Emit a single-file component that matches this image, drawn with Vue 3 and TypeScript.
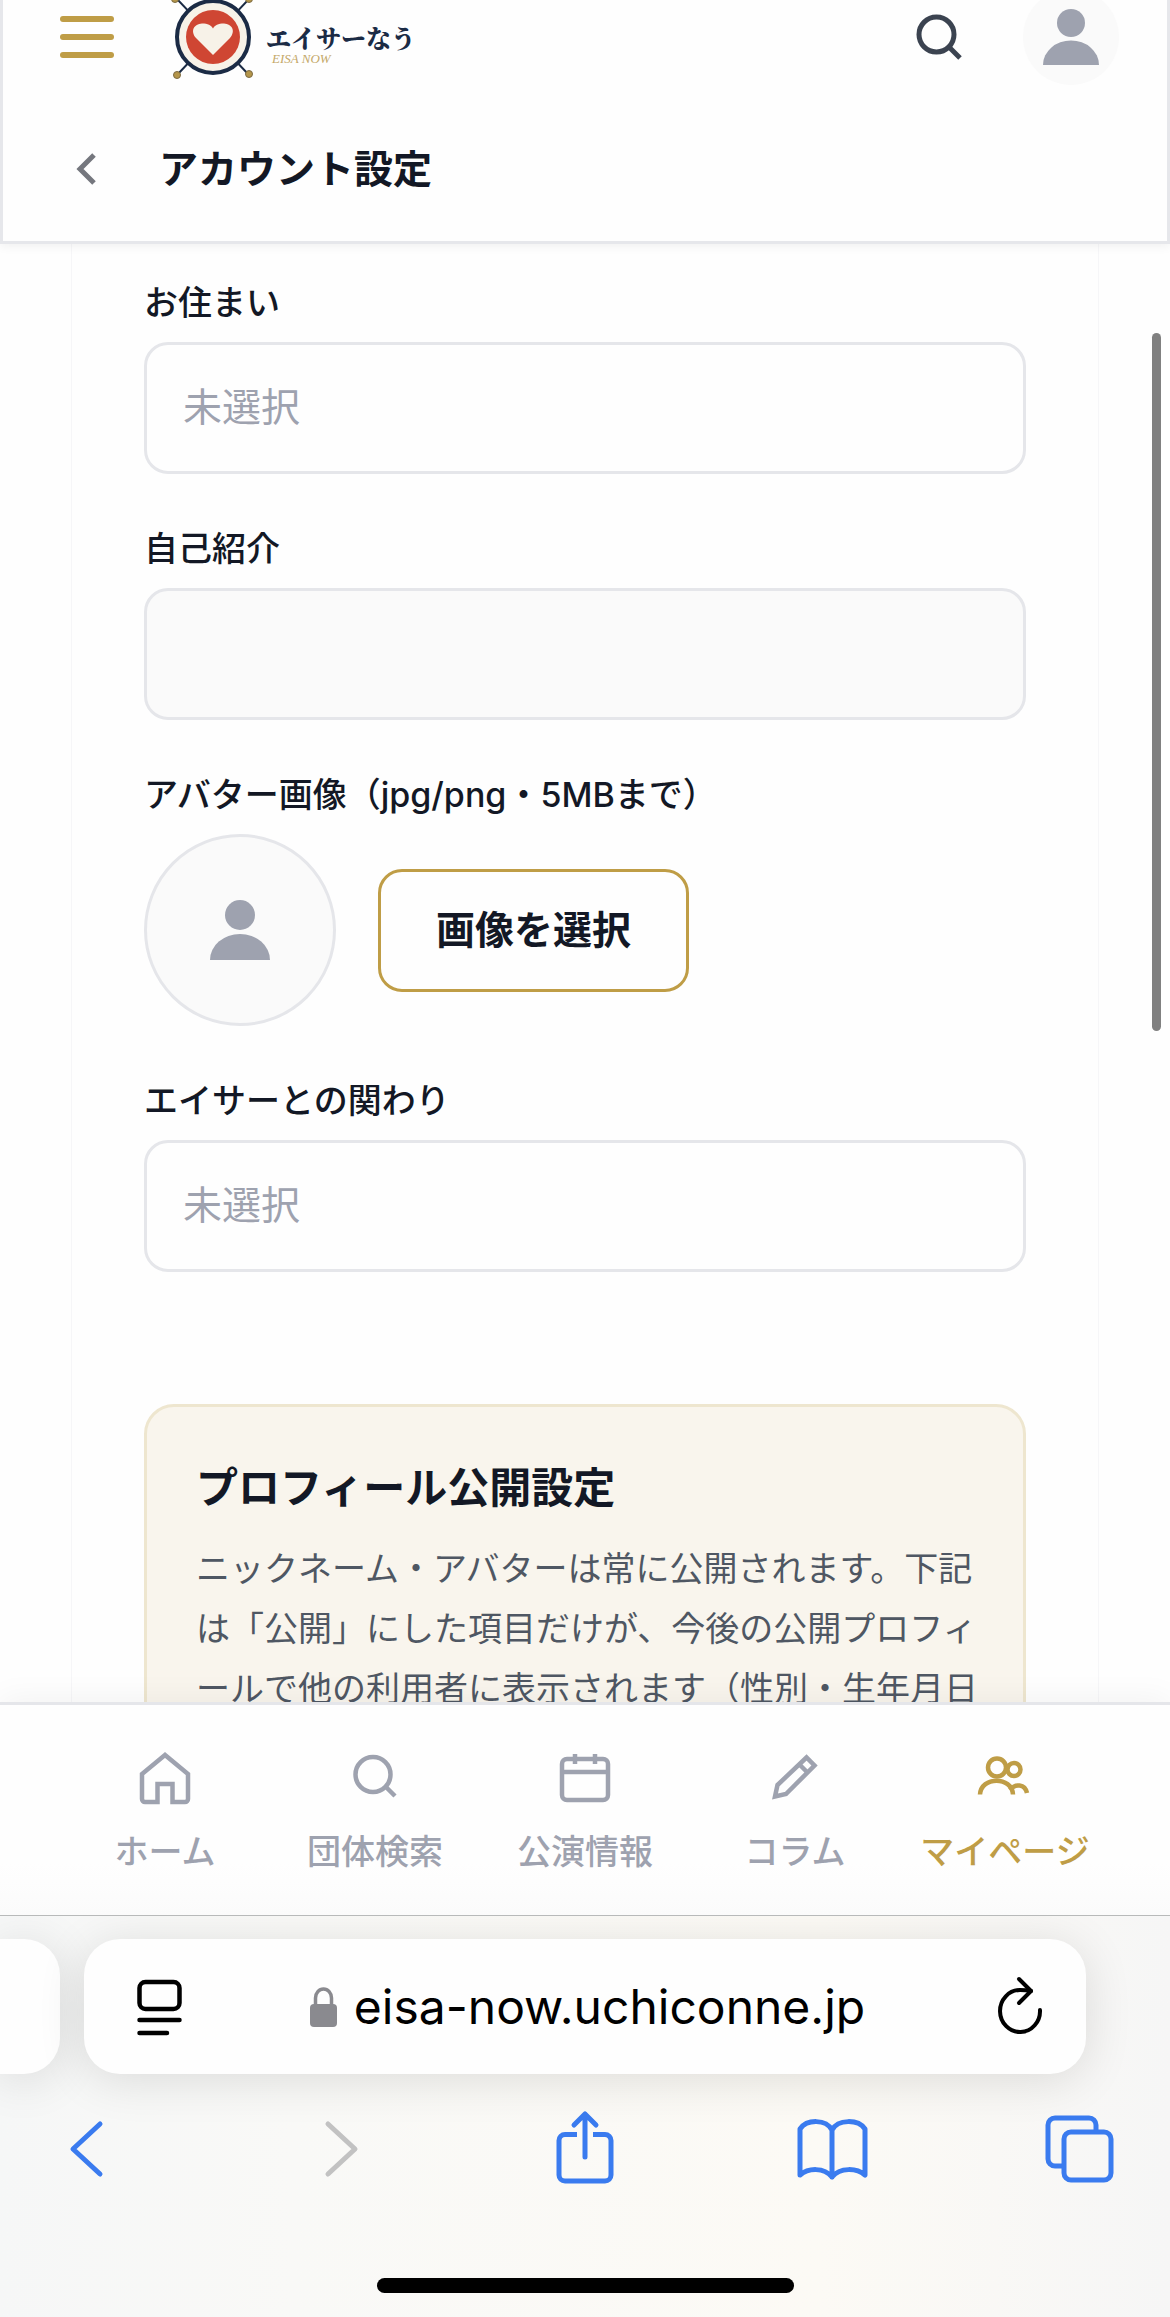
<script setup lang="ts">
import { ref } from 'vue'

interface NavItem {
  id: string
  label: string
  paths: string[]
}

const navItems: NavItem[] = [
  {
    id: 'home',
    label: 'ホーム',
    paths: ['M30 7 7 26V51a3 3 0 0 0 3 3H22.5V36H37.5V54H50a3 3 0 0 0 3-3V26Z'],
  },
  {
    id: 'groups',
    label: '団体検索',
    paths: ['M10.5 26.5a17.5 17.5 0 1 0 35 0a17.5 17.5 0 1 0-35 0', 'M40 38 50 48'],
  },
  {
    id: 'events',
    label: '公演情報',
    paths: [
      'M12 11H48a5 5 0 0 1 5 5V47a5 5 0 0 1-5 5H12a5 5 0 0 1-5-5V16a5 5 0 0 1 5-5Z',
      'M7 24H53',
      'M20 6V16M40 6V16',
    ],
  },
  {
    id: 'column',
    label: 'コラム',
    paths: ['M10 48.5 12.5 37 41.5 9.5 49.5 17.5 21 46Z', 'M34 16 43 25'],
  },
  {
    id: 'mypage',
    label: 'マイページ',
    paths: [
      'M13 19.5a9 9 0 1 0 18 0a9 9 0 1 0-18 0',
      'M32.5 21.5a6.5 6.5 0 1 0 13 0a6.5 6.5 0 1 0-13 0',
      'M5 46.5C6 28 37 28 38 46.5',
      'M35 42C40 35 50 36 52 45',
    ],
  },
]

const activeNav = ref('mypage')
const residence = ref('')
const involvement = ref('')
const introduction = ref('')
</script>

<template>
  <div class="screen">
    <header class="header">
      <div class="brand-row">
        <button class="plain burger" type="button" aria-label="メニュー">
          <span></span><span></span><span></span>
        </button>
        <a class="brand" href="#">
          <svg class="brand-mark" viewBox="0 0 84 84" aria-hidden="true">
            <path d="M6 80 78 4M78 80 6 4" stroke="#1b2b45" stroke-width="2" />
            <circle cx="42" cy="42" r="36" fill="#f7f2e8" stroke="#1b2b45" stroke-width="4" />
            <circle cx="42" cy="42" r="27" fill="#cf4633" />
            <path
              d="M42 60 25 43C19 36 23 29 31 28.5C37 28.5 40 30 42 33.5C44 30 47 28.5 53 28.5C61 29 65 36 59 43Z"
              fill="#f7f2e8"
            />
            <g fill="#b5964a" stroke="#7c6a42" stroke-width="1">
              <circle cx="6" cy="80" r="3.5" />
              <circle cx="78" cy="79" r="3.5" />
              <circle cx="4" cy="4" r="3.5" />
              <circle cx="78" cy="4" r="3.5" />
            </g>
          </svg>
          <span class="brand-text">
            <span class="brand-name">エイサーなう</span>
            <span class="brand-sub">EISA NOW</span>
          </span>
        </a>
        <button class="plain search" type="button" aria-label="検索">
          <svg width="60" height="60" viewBox="0 0 60 60" fill="none" stroke="#3b4350" stroke-width="5">
            <circle cx="30.5" cy="27.5" r="17.5" />
            <path d="M43 40 54 51" />
          </svg>
        </button>
        <button class="plain account" type="button" aria-label="アカウント">
          <svg width="60" height="60" viewBox="0 0 60 60" fill="#9ea2af">
            <circle cx="30" cy="16" r="14" />
            <path d="M2 58a28 24.5 0 0 1 56 0Z" />
          </svg>
        </button>
      </div>
      <div class="title-row">
        <button class="plain" type="button" aria-label="戻る">
          <svg width="36" height="36" viewBox="0 0 36 36" fill="none" stroke="#75777e" stroke-width="5">
            <path d="M25 4 11 18 25 32" />
          </svg>
        </button>
        <h1>アカウント設定</h1>
      </div>
    </header>

    <main class="main">
      <form class="panel" @submit.prevent>
        <div class="field">
          <label for="residence">お住まい</label>
          <select id="residence" v-model="residence" class="control">
            <option value="">未選択</option>
          </select>
        </div>
        <div class="field">
          <label for="introduction">自己紹介</label>
          <input id="introduction" v-model="introduction" class="control filled" type="text" />
        </div>
        <div class="field">
          <label for="avatar">アバター画像（jpg/png・5MBまで）</label>
          <div class="avatar-row">
            <div class="avatar">
              <svg width="60" height="60" viewBox="0 0 60 60" fill="#9ea2af">
                <circle cx="30" cy="15" r="15" />
                <path d="M0 60a30 26 0 0 1 60 0Z" />
              </svg>
            </div>
            <button id="avatar" class="pick" type="button">画像を選択</button>
          </div>
        </div>
        <div class="field">
          <label for="involvement">エイサーとの関わり</label>
          <select id="involvement" v-model="involvement" class="control">
            <option value="">未選択</option>
          </select>
        </div>
        <section class="privacy">
          <h2>プロフィール公開設定</h2>
          <p>
            ニックネーム・アバターは常に公開されます。下記は「公開」にした項目だけが、今後の公開プロフィールで他の利用者に表示されます（性別・生年月日
          </p>
        </section>
      </form>
      <div class="scroll-thumb"></div>
    </main>

    <nav class="tabs">
      <a
        v-for="item in navItems"
        :key="item.id"
        href="#"
        :class="{ active: item.id === activeNav }"
        @click.prevent="activeNav = item.id"
      >
        <svg width="60" height="60" viewBox="0 0 60 60" fill="none" stroke="currentColor" stroke-width="4.5">
          <path v-for="d in item.paths" :key="d" :d="d" />
        </svg>
        <span>{{ item.label }}</span>
      </a>
    </nav>

    <footer class="browser">
      <div class="address-row">
        <div class="pill previous"></div>
        <div class="pill address">
          <button class="plain" type="button" aria-label="ページ設定">
            <svg
              width="45"
              height="56"
              viewBox="0 0 45 56"
              fill="none"
              stroke="#000"
              stroke-width="4.5"
              stroke-linecap="round"
            >
              <rect x="2.5" y="3" width="40" height="27" rx="6" />
              <path d="M2.5 41H42.5M2.5 54H30" />
            </svg>
          </button>
          <button class="plain url" type="button">
            <svg width="27" height="40" viewBox="0 0 27 40" aria-hidden="true">
              <path d="M5.5 19V11a8 9 0 0 1 16 0V19" fill="none" stroke="#8a8a8f" stroke-width="3.5" />
              <rect y="17" width="27" height="23" rx="4" fill="#8a8a8f" />
            </svg>
            <span>eisa-now.uchiconne.jp</span>
          </button>
          <button class="plain" type="button" aria-label="再読み込み">
            <svg
              width="54"
              height="64"
              viewBox="0 0 54 64"
              fill="none"
              stroke="#000"
              stroke-width="4"
              stroke-linecap="round"
              stroke-linejoin="round"
            >
              <path d="M47 35A20 21 0 1 1 27 15Q33 15 38 16" />
              <path d="M26 4 38 16 26 28" />
            </svg>
          </button>
        </div>
      </div>
      <div class="toolbar">
        <button class="plain" type="button" aria-label="前のページ">
          <svg viewBox="0 0 72 72"><path d="M48 13 21 38 48 63" /></svg>
        </button>
        <button class="plain" type="button" aria-label="次のページ" disabled>
          <svg viewBox="0 0 72 72"><path d="M27 13 54 38 27 63" /></svg>
        </button>
        <button class="plain" type="button" aria-label="共有">
          <svg viewBox="0 0 72 72">
            <path
              stroke-linecap="butt"
              d="M28 23.5H16a6 6 0 0 0-6 6V64a6 6 0 0 0 6 6H56a6 6 0 0 0 6-6V29.5a6 6 0 0 0-6-6H44"
            />
            <path d="M36 46V3M25 14 36 3 47 14" />
          </svg>
        </button>
        <button class="plain" type="button" aria-label="ブックマーク">
          <svg viewBox="0 0 72 72">
            <path
              d="M34 19C28 8 9 8 2 18V64C10 57 26 56 34 66C42 56 59 57 67 64V18C60 8 40 8 34 19V66"
            />
          </svg>
        </button>
        <button class="plain" type="button" aria-label="タブ一覧">
          <svg viewBox="0 0 72 72">
            <path
              stroke-linecap="butt"
              d="M17 55H9a7 7 0 0 1-7-7V14a7 7 0 0 1 7-7H43a7 7 0 0 1 7 7V20"
            />
            <rect x="18" y="21" width="47" height="48" rx="7" />
          </svg>
        </button>
      </div>
      <div class="home-indicator"></div>
    </footer>
  </div>
</template>

<style>
body {
  margin: 0;
}
</style>

<style scoped>
.screen {
  --gold: #bf9d46;
  --ink: #131825;
  --muted: #9ea2af;
  --line: #e5e6ea;
  display: flex;
  flex-direction: column;
  height: 100vh;
  overflow: hidden;
  background: #fefefe;
  color: var(--ink);
  font-family: Inter, 'Noto Sans CJK JP', sans-serif;
}

.screen *,
.screen {
  box-sizing: border-box;
}

svg {
  display: block;
  flex: none;
  overflow: visible;
}

a {
  color: inherit;
  text-decoration: none;
}

.plain {
  display: flex;
  align-items: center;
  padding: 0;
  border: 0;
  background: none;
  color: inherit;
  font: inherit;
}

.header {
  flex: none;
  position: relative;
  z-index: 1;
  padding-bottom: 42px;
  border: 3px solid #e6e7eb;
  border-top: 0;
  background: #fefefe;
  box-shadow: 0 3px 9px rgba(0, 0, 0, 0.05);
}

.brand-row {
  display: flex;
  align-items: center;
  height: 74px;
  padding: 0 48px 0 57px;
}

.burger {
  flex-direction: column;
  gap: 12px;
  width: 54px;
}

.burger span {
  width: 54px;
  height: 6px;
  border-radius: 3px;
  background: var(--gold);
}

.brand {
  display: flex;
  align-items: center;
  gap: 11px;
  margin: 0 auto 0 57px;
}

.brand-mark {
  width: 84px;
  height: 84px;
  fill: none;
}

.brand-text {
  display: flex;
  flex-direction: column;
  padding-top: 14px;
  color: #1b2b45;
}

.brand-name {
  font: 900 25px/30px 'Noto Serif CJK JP', 'Noto Sans CJK JP', serif;
}

.brand-sub {
  padding-left: 6px;
  color: #c4a869;
  font: italic 13px/14px 'Liberation Serif', serif;
}

.search {
  margin-right: 57px;
}

.account {
  justify-content: center;
  width: 96px;
  height: 96px;
  border-radius: 50%;
  background: #fafafa;
}

.title-row {
  display: flex;
  align-items: center;
  gap: 54px;
  height: 60px;
  margin-top: 65px;
  padding-left: 66px;
}

h1 {
  margin: 0;
  font-size: 39px;
  font-weight: 700;
  line-height: 60px;
}

.main {
  flex: 1;
  position: relative;
  min-height: 0;
  overflow: hidden;
}

.panel {
  margin: 0 71px;
  padding: 33px 72px 72px;
  border: 1px solid #f6f6f8;
  border-width: 0 1px;
}

.field {
  display: flex;
  flex-direction: column;
  gap: 13px;
  margin-bottom: 49px;
}

label {
  font-size: 34px;
  font-weight: 500;
  line-height: 52px;
}

.control {
  appearance: none;
  width: 100%;
  height: 132px;
  padding: 0 36px 3px;
  border: 3px solid var(--line);
  border-radius: 24px;
  background: #fefefe;
  color: var(--muted);
  font: inherit;
  font-size: 39px;
}

.filled {
  background: #fafafa;
}

.avatar-row {
  display: flex;
  align-items: center;
  gap: 42px;
}

.avatar {
  display: flex;
  align-items: center;
  justify-content: center;
  width: 192px;
  height: 192px;
  border: 3px solid var(--line);
  border-radius: 50%;
  background: #fafafa;
}

.pick {
  padding: 29px 55px 31px;
  border: 3px solid var(--gold);
  border-radius: 24px;
  background: #fefefe;
  color: var(--ink);
  font: inherit;
  font-size: 39px;
  font-weight: 700;
  line-height: 57px;
}

.privacy {
  margin-top: 132px;
  padding: 51px 40px 51px 49px;
  border: 3px solid #eee6cf;
  border-radius: 30px;
  background: #f9f5ed;
}

h2 {
  margin: 0 0 21px;
  font-size: 42px;
  font-weight: 700;
  line-height: 60px;
}

p {
  margin: 0;
  color: #4f5763;
  font-size: 34px;
  line-height: 60px;
  line-break: loose;
}

.scroll-thumb {
  position: absolute;
  top: 89px;
  right: 9px;
  width: 9px;
  height: 698px;
  border-radius: 5px;
  background: #808080;
}

.tabs {
  flex: none;
  position: relative;
  z-index: 1;
  display: grid;
  grid-template-columns: repeat(5, 1fr);
  padding: 43px 60px;
  border-top: 3px solid var(--line);
  background: linear-gradient(#fefefe 75%, #fbfbfb);
  box-shadow: 0 -3px 30px rgba(0, 0, 0, 0.05);
  color: var(--muted);
}

.tabs a {
  display: flex;
  flex-direction: column;
  align-items: center;
  gap: 24px;
  font-size: 34px;
  font-weight: 500;
  line-height: 40px;
  white-space: nowrap;
}

.tabs .active {
  color: var(--gold);
}

.browser {
  flex: none;
  position: relative;
  z-index: 2;
  padding: 23px 0 24px;
  border-top: 1px solid #b8baba;
  background: linear-gradient(90deg, #f6f7f7, #f9f9f7 25%, #fcfaf5 70%, #f6f6f6);
}

.address-row {
  display: flex;
  gap: 24px;
  padding-right: 84px;
}

.pill {
  height: 135px;
  border-radius: 36px;
  background: #fefefe;
  box-shadow: 0 6px 48px rgba(0, 0, 0, 0.12);
  clip-path: inset(-23px -84px -90px -84px);
}

.previous {
  width: 60px;
  border-radius: 0 36px 36px 0;
}

.address {
  flex: 1;
  display: flex;
  align-items: center;
  justify-content: space-between;
  padding: 0 39px 0 53px;
}

.url {
  gap: 17px;
  color: #000;
  font-size: 48px;
  line-height: 60px;
}

.toolbar {
  display: flex;
  justify-content: space-between;
  margin-top: 37px;
  padding: 0 52px;
  color: #3a7bef;
}

.toolbar button:disabled {
  color: #c2c2c2;
}

.toolbar svg {
  width: 72px;
  height: 72px;
  fill: none;
  stroke: currentColor;
  stroke-width: 5;
  stroke-linecap: round;
  stroke-linejoin: round;
}

.home-indicator {
  width: 417px;
  height: 15px;
  margin: 95px auto 0;
  border-radius: 8px;
  background: #000;
}
</style>
